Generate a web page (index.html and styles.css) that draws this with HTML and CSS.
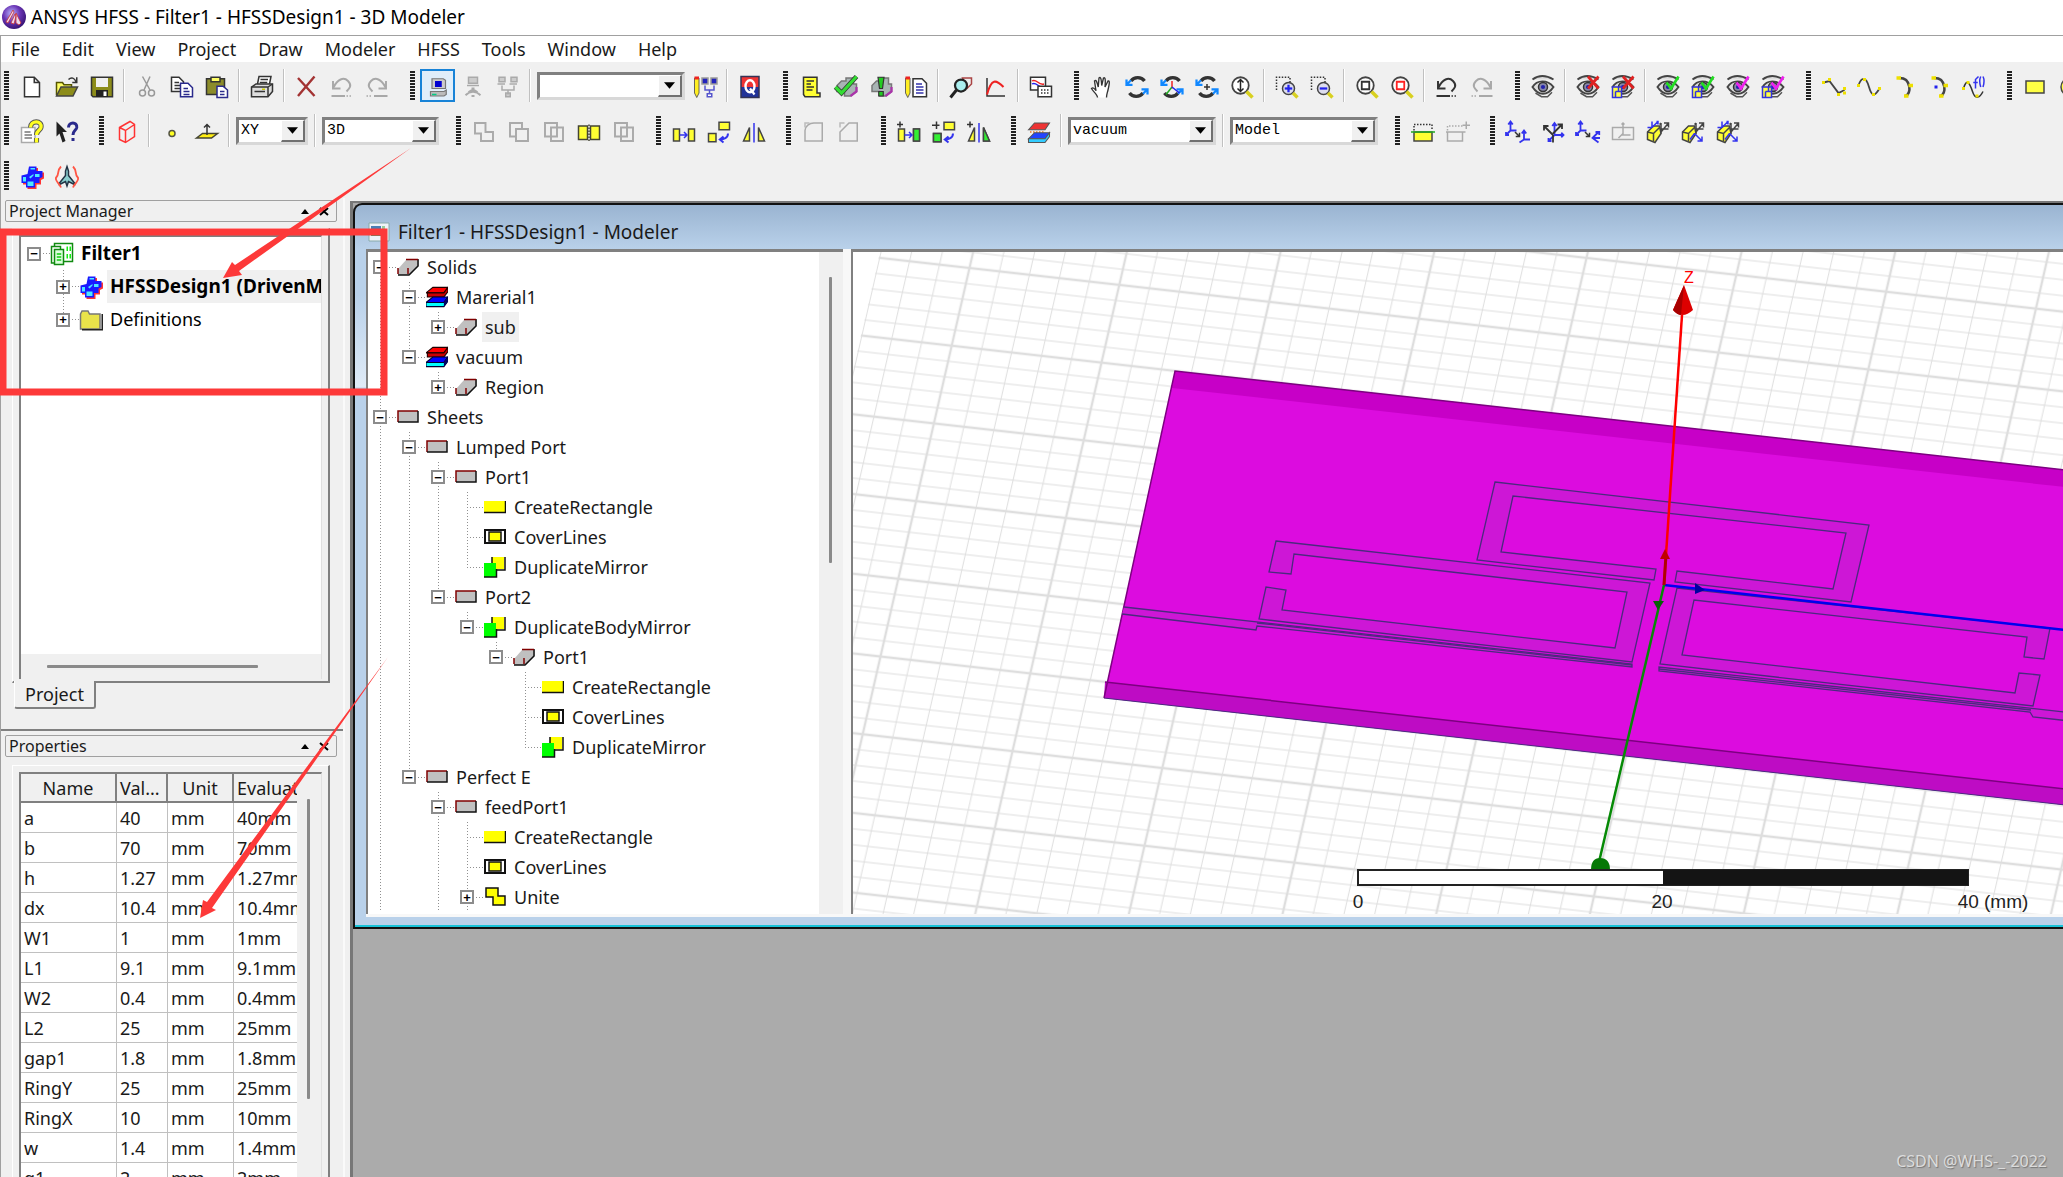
FILE: index.html
```html
<!DOCTYPE html>
<html lang="en">
<head>
<meta charset="utf-8">
<title>ANSYS HFSS - Filter1 - HFSSDesign1 - 3D Modeler</title>
<link rel="stylesheet" href="styles.css">
</head>
<body>
<svg class="defs" aria-hidden="true">
  <defs>
    <g id="new"><path d="M3 1.500h6.500l3.500 3.500v9.500H3zM9.500 1.500V5H13" fill="#fff" stroke="#333"/></g>
    <g id="open"><path d="M1 13.500V5h4l1 1.500h5V8" fill="#ffff66" stroke="#555500"/><path d="M1 14l3-6h11l-3 6z" fill="#8c8c1a" stroke="#444"/><path d="M9 3c2-2 4-1 5 1.500M14.500 1.500v3.500h-3" fill="none" stroke="#333"/></g>
    <g id="save"><path d="M1 1.500h14v13H2l-1-1z" fill="#8c8c1a" stroke="#333"/><path d="M4 2h8v6H4z" fill="#f0f0f0"/><path d="M4 10h8v4.500H4z" fill="#222"/><path d="M9 11h2v3H9z" fill="#fff"/></g>
    <g id="cut" fill="none" stroke="#999"><path d="M5 1l5 9M10 1L6 10"/><circle cx="5" cy="12" r="2"/><circle cx="11" cy="12" r="2"/></g>
    <g id="copy"><path d="M1 1.500h5l3 3V11H1z" fill="#fff" stroke="#333"/><path d="M3 5h3M3 7h4M3 9h4" stroke="#333"/><path d="M7 5.500h5l3 3v6H7z" fill="#fff" stroke="#2a2a8c"/><path d="M9 9h3M9 11h4M9 13h4" stroke="#2a2a8c"/></g>
    <g id="paste"><path d="M1 2.500h12V13H1z" fill="#8c8c2a" stroke="#333"/><path d="M4 1.500h6v3H4z" fill="#ffff66" stroke="#333"/><path d="M8 7.500h4l3 2.500v5H8z" fill="#fff" stroke="#2a2a8c"/><path d="M10 11h3M10 13h3" stroke="#2a2a8c"/></g>
    <g id="print"><path d="M5 6l1-5h8l-1 5" fill="#fff" stroke="#333"/><path d="M7 3h5M6.500 5h5" stroke="#333"/><path d="M1 8l3-2h11v5l-3 3.500H1z" fill="#ddd" stroke="#333"/><path d="M1 8h11v6M12 8l3-2M3 11h7" fill="none" stroke="#333"/><path d="M8 9.500h2" stroke="#cc0"/></g>
    <g id="del"><path d="M2 2l11 12M13 1L2 14" fill="none" stroke="#a33333" stroke-width="1.600"/></g>
    <g id="undo"><path d="M2 4v5h5M2.500 8C5 3 9 1 12 4s1 5-1 7M1 14h9" fill="none" stroke="currentColor" stroke-width="1.300"/><path d="M11 14h4" stroke="currentColor" stroke-dasharray="1 1"/></g>
    <g id="redo"><path d="M14 4v5H9M13.500 8C11 3 7 1 4 4s-1 5 1 7M6 14h9" fill="none" stroke="currentColor" stroke-width="1.300"/><path d="M1 14h4" stroke="currentColor" stroke-dasharray="1 1"/></g>
    <g id="pc"><path d="M4 2.500h7.500l1.500 1v5.500H4z" fill="#ccc" stroke="#777" stroke-width=".8"/><path d="M6 4h4.500v4H6z" fill="#0000d0"/><path d="M3 11h9l1.500-1v3L12 14H3z" fill="#bbb" stroke="#777" stroke-width=".8"/><path d="M4 13h3" stroke="#0c8"/></g>
    <g id="net1" fill="#ccc" stroke="#aaa"><path d="M5 1.500h6v4H5zM4 7h8"/><path d="M7 9h2M5 11.500c2-2 4-2 6 0M3 13.500c3-3 7-3 10 0M7 14h2" fill="none" stroke-width="1.200"/></g>
    <g id="net2" fill="#ccc" stroke="#aaa"><path d="M2 1.500h4v3H2zM10 1.500h4v3h-4zM1 6h5M9 6h5M8 10v3M6.500 12h3v2.500h-3z"/><path d="M4 7v3h8V7" fill="none"/></g>
    <g id="pnet"><path d="M1 2h3v10l-1.500 3L1 12z" fill="#ffee22" stroke="#555" stroke-width=".6"/><path d="M1 1h3v2H1z" fill="#e22"/><path d="M6 2h4v4H6zM12 2h4v4h-4z" fill="#2222bb" stroke="#999"/><path d="M8 7v3h6V7M11 10v3" fill="none" stroke="#5555cc"/><path d="M9.500 12.500h3v2h-3z" fill="#fff" stroke="#5555cc"/></g>
    <g id="q"><path d="M2 1h12v7H2z" fill="#e33"/><path d="M2 8h12v7H2z" fill="#223399"/><path d="M2 1h12v14H2z" fill="none" stroke="#335"/><ellipse cx="8" cy="7.500" rx="3" ry="4" fill="none" stroke="#fff" stroke-width="1.600"/><path d="M8 9l3 4" stroke="#fff" stroke-width="1.500"/></g>
    <g id="script"><path d="M3 1.500h9V12h2v2.500H4L3 13z" fill="#ffff33" stroke="#333"/><path d="M5 4h5M5 6h3M5 8h5M5 10h4" stroke="#333"/></g>
    <g id="gem"><path d="M8 2h5v4h2v5l-4 3H7V11H2V7l3-3h3z" fill="#a8b4b4" stroke="#777"/><path d="M11 14l4-3v-3" fill="none" stroke="#a3a" stroke-width="1.500"/></g>
    <g id="check"><path d="M1 8l4 4L15 1" fill="none" stroke="#333" stroke-width="3.200"/><path d="M1 8l4 4L15 1" fill="none" stroke="#3d3" stroke-width="2.200"/></g>
    <g id="bang"><path d="M6 1.500h4L9 9H7zM6.500 11h3v3h-3z" fill="#2c2" stroke="#333" stroke-width=".8"/></g>
    <g id="notes"><path d="M1 2h3v10l-1.500 3L1 12z" fill="#ffee22" stroke="#555" stroke-width=".6"/><path d="M1 1h3v2H1z" fill="#e22"/><path d="M6 2.500h6l3 3v9H6z" fill="#fff" stroke="#333"/><path d="M8 6h4M8 8h5M8 10h5M8 12h5" stroke="#3333aa"/></g>
    <g id="analyze"><path d="M9 2h6v4l-3 3z" fill="#eee" stroke="#a44"/><circle cx="8" cy="7" r="4" fill="#aee" stroke="#222" stroke-width="1.500"/><path d="M5 10l-4 5" stroke="#222" stroke-width="2"/></g>
    <g id="plot"><path d="M2 2v12h12" fill="none" stroke="#333"/><path d="M2 13C5 2 8 3 13 8" fill="none" stroke="#e22" stroke-width="1.400"/></g>
    <g id="cdoc"><path d="M1 1.500h10V10H1z" fill="#fff" stroke="#333"/><path d="M2 4c3-2 4 3 8 2" fill="none" stroke="#e22"/><path d="M2 6c3-2 4 3 8 2" fill="none" stroke="#22e"/><path d="M6 7.500h9v7H6z" fill="#fff" stroke="#333"/><path d="M8 10h6M8 12h6" stroke="#333" stroke-dasharray="1 1"/></g>
    <g id="hand"><path d="M5 15c0-2-3-4-4-6 1-1 2 0 3 1.500L3 4c1-1 1.500 0 2.500 4L6 2c1-1 1.500 0 1.800 5L9 2c1-.6 1.500 0 1 6l2-4c1-.3 1.300.5 0 6-.5 2-1 3-1 5" fill="#fff" stroke="#333" stroke-width=".9"/></g>
    <g id="rot" fill="none"><path d="M4 4c2-3 7-3 9 0M3 12c2 3 7 3 9 0" stroke="#333" stroke-width="2.200"/><path d="M1 3v3.500h4M15 13V9.500h-4M1.500 6L4 3.500M14.500 10L12 12.500" stroke="#1188ff" stroke-width="1.500"/></g>
    <g id="ax"><path d="M8 4v5" stroke="#e22"/><path d="M8 8l-4 5" stroke="#2a2"/><path d="M8 8l5 4" stroke="#22e"/></g>
    <g id="cross"><path d="M8 6v4M6 8h4" stroke="#333"/></g>
    <g id="lens"><circle cx="7" cy="7" r="5.500" fill="#fff" stroke="#444" stroke-width="1.200"/><path d="M11 11l4 4" stroke="#d8d020" stroke-width="2.400"/></g>
    <g id="ud"><path d="M7 3v8M5 5l2-2 2 2M5 9l2 2 2-2" fill="none" stroke="#222"/></g>
    <g id="zarea"><path d="M1 10V1.500h9v4" fill="none" stroke="#333" stroke-dasharray="1 1"/><circle cx="9" cy="9" r="4" fill="#dde" stroke="#444"/><path d="M12 12l3 3" stroke="#d8d020" stroke-width="2.200"/><path d="M6.500 9h5" stroke="#22e" stroke-width="1.500"/></g>
    <g id="plusv"><path d="M9 6.500v5" stroke="#22e" stroke-width="1.500"/></g>
    <g id="sq"><path d="M4.500 4.500h5v5h-5z" fill="none" stroke="currentColor" stroke-width="1.200"/></g>
    <g id="eye"><path d="M1 3c4-3 9-3 14 0M1 8c3-5 10-5 14 0-4 6-10 6-14 0z" fill="#ddd" stroke="#444" stroke-width="1.300"/><circle cx="8" cy="8" r="3" fill="#8888aa" stroke="#333"/><circle cx="8" cy="8" r="1.400" fill="#22a"/><path d="M3 12l4 2.500h4l3-3" fill="none" stroke="#555"/></g>
    <g id="bx"><path d="M1 8h6v7H1z" fill="#ffff44" stroke="#33d"/><path d="M3 11h4M3 11v4M5 8v3" stroke="#33d"/></g>
    <g id="rx"><path d="M8 1l7 8M15 1L8 9" stroke="#e02222" stroke-width="1.800"/></g>
    <g id="ck"><path d="M7 5l3 4 5-8" fill="none" stroke="currentColor" stroke-width="1.800"/></g>
    <g id="l1"><path d="M1 5l4-1 6 8 4-2" fill="none" stroke="#444" stroke-width="1.300"/><path d="M0 5h2M4 3h2M10 13h2M14 9h2M14 12h2" stroke="#eee000" stroke-width="2"/></g>
    <g id="l2"><path d="M1 7c2-6 5-6 7 1s4 6 7 1" fill="none" stroke="#444" stroke-width="1.200"/><path d="M0 7h2M4 3h2M10 13h2M14 9h2" stroke="#eee000" stroke-width="2"/></g>
    <g id="l3"><path d="M5 2c8 0 8 11 4 12" fill="none" stroke="#444" stroke-width="1.700"/><path d="M3 2h3M11 7h3M8 14h3" stroke="#eee000" stroke-width="2.400"/></g>
    <g id="bdot"><path d="M5 8h2" stroke="#22e" stroke-width="2"/></g>
    <g id="l5"><path d="M1 9c2-7 4-4 6 2s5 4 7 0" fill="none" stroke="#333"/><path d="M0 9h2M3 5h2M9 14h2" stroke="#eee000" stroke-width="2"/><path d="M9 9V3l2-2M7.500 5h3M12.500 1c-1 2-1 4 0 7M14 1c1 2 1 4 0 7" fill="none" stroke="#33e"/></g>
    <g id="yrect"><path d="M2 4h12v8H2z" fill="#ffff44" stroke="#444"/></g>
    <g id="ycirc"><circle cx="8" cy="8" r="6" fill="#ffff44" stroke="#444"/></g>
    <g id="help"><path d="M1 5h9v10H1z" fill="#fff" stroke="#aaa"/><path d="M3 8h4M3 10h5M3 12h5" stroke="#777"/><path d="M7 5c0-5 8-5 7 0-.4 2-3 2-3 5M11 12v3" fill="none" stroke="#555" stroke-width="3.400"/><path d="M7 5c0-5 8-5 7 0-.4 2-3 2-3 5M11 12v3" fill="none" stroke="#ffff22" stroke-width="2.200"/></g>
    <g id="whats"><path d="M1 1l7 7H5l2 6-2 1-2-6-2 2z" fill="#222"/><path d="M9 5c0-4 6-4 5.500 0-.4 2-2.500 2-2.500 5M12 12v2" fill="none" stroke="#2a2a8c" stroke-width="2"/></g>
    <g id="rbox" fill="none" stroke="#f33"><path d="M3 5l7-4 3 2v8l-6 4-4-2zM3 5l4 2 6-4M7 7v8"/></g>
    <g id="pt"><circle cx="8" cy="9" r="2" fill="#ffff22" stroke="#554"/></g>
    <g id="plane"><path d="M1 12l4-3h10l-4 3z" fill="#ffee11" stroke="#443"/><path d="M8 10V3M6 5l2-2 2 2" fill="none" stroke="#333"/></g>
    <g id="uni"><path d="M2 2h7v6h5v6H6V9H2z" fill="none" stroke="#aaa" stroke-width="1.300"/></g>
    <g id="sub"><path d="M2 2h8v4H6v5H2zM6 6h8v8H6z" fill="none" stroke="#aaa" stroke-width="1.300"/></g>
    <g id="int"><path d="M2 2h8v9H2zM6 5h8v9H6z" fill="none" stroke="#aaa" stroke-width="1.300"/></g>
    <g id="split"><path d="M1 4h6v9H1zM9 4h6v9H9z" fill="#ffff33" stroke="#443"/><path d="M8 3v11" stroke="#443" stroke-dasharray="1 1"/></g>
    <g id="move"><path d="M1 6h4v8H1zM11 6h4v8h-4z" fill="#ffff33" stroke="#444"/><path d="M5 10h5M8 8l2 2-2 2" fill="none" stroke="#33e"/></g>
    <g id="turn"><path d="M8 1.500h7v5H8zM1 9h5v5.500H1z" fill="#ffff33" stroke="#444"/><path d="M14 9c0 3-3 4-5 4M11 11l-2.500 2 2.500 2" fill="none" stroke="#33e" stroke-width="1.300"/></g>
    <g id="mir"><path d="M1 14l4-9v9zM15 14l-4-9v9z" fill="#ffff33" stroke="#444"/><path d="M8 2v13" stroke="#33e"/></g>
    <g id="movd"><path d="M11 6h4v8h-4z" fill="#3e3" stroke="#444"/><path d="M2 1v4M0 3h4" stroke="#333"/></g>
    <g id="turd"><path d="M1 9h5v5.500H1z" fill="#3e3" stroke="#444"/><path d="M3 1v5M0 3.500h5" stroke="#333"/></g>
    <g id="mird"><path d="M15 14l-4-9v9z" fill="#3e3" stroke="#444"/><path d="M2 1v4M0 3h4" stroke="#333"/></g>
    <g id="fil"><path d="M2 14V7c0-3 3-5 6-5h5.500v12z" fill="none" stroke="#aaa"/><path d="M2 5V2h3" fill="none" stroke="#bbb"/></g>
    <g id="cham"><path d="M2 14V8l6-6h5.500v12z" fill="none" stroke="#aaa"/><path d="M2 5V2h3" fill="none" stroke="#bbb"/></g>
    <g id="matl"><path d="M1 6.500L5 2h10l-3 4.500z" fill="#ee3333" stroke="#555" stroke-width=".7"/><path d="M2 8h10" stroke="#e87722" stroke-dasharray="1 1"/><path d="M1 12.500l4-4h10l-3 4z" fill="#2244ff" stroke="#555" stroke-width=".7"/><path d="M1 12.500h11l3-4V11l-3 4H1z" fill="#33ccff" stroke="#555" stroke-width=".7"/></g>
    <g id="mat"><path d="M0 5l5-4h11l-3 4z" fill="#f00" stroke="#200" stroke-width=".8"/><path d="M1 5h12l3-4v3l-3 4H1z" fill="#c00" stroke="#200" stroke-width=".8"/><path d="M0 12l5-4h11l-3 4z" fill="#00f" stroke="#003" stroke-width=".8"/><path d="M0 12h13l3-4v3l-3 4H0z" fill="#0ff" stroke="#003" stroke-width=".8"/><path d="M13 12l3-4v3l-3 4z" fill="#006"/></g>
    <g id="sec"><path d="M2 8h12v6H2z" fill="#ffff33" stroke="#444"/><path d="M0 8h16" stroke="#2a2"/><path d="M2 7V3h12v4" fill="none" stroke="#333" stroke-dasharray="1 1"/></g>
    <g id="secg" fill="none" stroke="#aaa"><path d="M1 8h10v6H1zM0 8h13M13.500 1v5M11 3.500h5"/><path d="M1 7V4h10" stroke-dasharray="1 1"/></g>
    <g id="csa" fill="none"><path d="M3 1v6h4M0 10l3-3M1.500 3L3 1l1.500 2M0 8v2h2" stroke="#33e" stroke-width="1.200"/><path d="M6 8l3 3M9 8.500V11H6.500" stroke="#333"/><path d="M12 7v6h4M9 15l3-2M10.500 9L12 7l1.500 2" stroke="#33e" stroke-width="1.200"/></g>
    <g id="csb" fill="none"><path d="M9 2v8h6M9 10l-4 4M7.500 4L9 2l1.500 2M13.500 8.500l1.500 1.500-1.500 1.500M5 12v2h2" stroke="#33e" stroke-width="1.200"/><path d="M8 10L2 4M2 7V4h3M8 10v5M8 9l6-6M11 3h3v3" stroke="#333" stroke-width="1.200"/></g>
    <g id="csc" fill="none"><path d="M3 1v6h4M0 10l3-3M1.500 3L3 1l1.500 2M0 8v2h2" stroke="#33e" stroke-width="1.200"/><path d="M6 8l3 3M9 8.500V11H6.500" stroke="#333"/><path d="M15 8l-4 4 4 3M11 12h5M13 8h2.500v2" stroke="#33e" stroke-width="1.200"/></g>
    <g id="csg" fill="none" stroke="#aaa"><path d="M1 5h14v8H1zM8 2v8h5M8 9l-3 3M7 3l1-1 1 1"/></g>
    <g id="csbox"><path d="M1 8l4-4h4l1 5-4 6-5-2z" fill="#ffff33" stroke="#444"/><path d="M1 8l4 1 4-4M5 9v5" fill="none" stroke="#444"/><path d="M10 9V2M10 8l5-6M12 2h3v3M10 6h5M9 3l1-1" fill="none" stroke="#444"/></g>
    <g id="csblue"><path d="M4 5V1M4 5H1M4 5l4-4M7 1h1v2" fill="none" stroke="#33e"/></g>
    <g id="csblue2"><path d="M9 9l5 5M11 14h3v-3M9 9l-3 4" fill="none" stroke="#33e"/></g>
    <g id="blocks"><path d="M6 1h5v3h4v4l-2 1v3h-3v3H4v-3H1V7l4-1z" fill="#f33" transform="translate(1 1)"/><path d="M6 1h5v3h4v4l-2 1v3h-3v3H4v-3H1V7l4-1z" fill="#1a1aff"/><path d="M7 2h3v1H7zM2 8h2v3H2zM10 6h3v2h-3zM6 8l3-2v1L7 9zM5 11h4v3H5z" fill="#4de8ff"/></g>
    <g id="plane2"><path d="M8 1l1 3v3l4 5v1l-4-2-1 3-1-3-4 2v-1l4-5V4z" fill="#8cc" stroke="#234"/><path d="M4 1C1 4 3 6 1 8s2 4 3 7M12 1c3 3 1 5 3 7s-2 4-3 7" fill="none" stroke="#f54" stroke-width="1.200"/></g>

    <symbol id="proj" viewBox="0 0 16 16"><path d="M3 1h12v12H3z" fill="#fff" stroke="#108a10"/><path d="M11 3h1v3h-1zM13 3h1v3h-1zM11 8h1v3h-1zM13 8h1v3h-1z" fill="#1e1"/><path d="M1 3h6v11H1z" fill="#fff" stroke="#108a10"/><path d="M3 5h6v10H3z" fill="#dfd" stroke="#108a10"/><path d="M4.500 8h3M4.500 10h3M4.500 12h3" stroke="#1c1"/></symbol>
    <symbol id="blk" viewBox="0 0 16 16"><use href="#blocks"/></symbol>
    <symbol id="folder" viewBox="0 0 16 16"><path d="M1 4l1-2h4l1 2h7v10H1z" fill="#e9e34a" stroke="#777"/><path d="M2 14.500h13.500V4" fill="none" stroke="#222"/></symbol>
    <symbol id="solid" viewBox="0 0 22 22"><path d="M1 13L9 4h13v6l-9 9H1z" fill="#c0c0c0"/><path d="M21 3v7l-9 9H1" fill="none" stroke="#111" stroke-width="1.500"/><path d="M9 3.500h12M1 12v6M11 12v6" fill="none" stroke="#800000" stroke-width="1.500"/></symbol>
    <symbol id="mats" viewBox="0 0 16 16"><use href="#mat"/></symbol>
    <symbol id="sheet" viewBox="0 0 22 22"><path d="M1 5h20v11H1z" fill="#c0c0c0"/><path d="M1 16V5h20" fill="none" stroke="#800000" stroke-width="1.500"/><path d="M1 16h20V5" fill="none" stroke="#111" stroke-width="1.500"/></symbol>
    <symbol id="crect" viewBox="0 0 22 22"><path d="M0 5h21v11H0z" fill="#ff0"/><path d="M0 16.500h21.500V5" fill="none" stroke="#111" stroke-width="1.500"/></symbol>
    <symbol id="cover" viewBox="0 0 22 22"><path d="M1 4h20v13H1z" fill="#fff" stroke="#111" stroke-width="2"/><path d="M5 6h12v9H5z" fill="#ff0" stroke="#111" stroke-width="1.500"/></symbol>
    <symbol id="dup" viewBox="0 0 22 22"><path d="M8 1h12v12H8z" fill="#ff0"/><path d="M8 1v6M21 1v13h-8" fill="none" stroke="#111" stroke-width="1.500"/><path d="M0 7h12v14H0z" fill="#0f0"/><path d="M0 21h12.500V13" fill="none" stroke="#111" stroke-width="1.500"/></symbol>
    <symbol id="unite" viewBox="0 0 22 22"><path d="M2 2h12v8h7v9H9v-8H2z" fill="#ff0" stroke="#111" stroke-width="1.500"/></symbol>
    <pattern id="mesh" width="150" height="80" patternUnits="userSpaceOnUse" patternTransform="matrix(.9987 .1127 -.2225 .9713 116.500 16)">
      <path d="M30 0v80M60 0v80M90 0v80M120 0v80M0 16h150M0 32h150M0 48h150M0 64h150" stroke="#dedede"/>
      <path d="M0 0v80M150 0v80M0 0h150M0 80h150" stroke="#dedede" stroke-width="2.400"/>
    </pattern>
    <radialGradient id="ball" cx=".4" cy=".35" r=".7"><stop offset="0" stop-color="#b9b6ff"/><stop offset=".5" stop-color="#6a35b5"/><stop offset="1" stop-color="#32106e"/></radialGradient>
  </defs>
</svg>

<header class="titlebar">
  <svg class="logo" viewBox="0 0 24 24" aria-hidden="true"><circle cx="12" cy="12" r="12" fill="url(#ball)"/><path d="M4 17L11 5l1 2-6 11zM9 18l4-9 1 2-2 8zM14 18V8l5 10-2 2z" fill="#e8d8f0" stroke="#c33" stroke-width=".8"/></svg>
  <span>ANSYS HFSS - Filter1 - HFSSDesign1 - 3D Modeler</span>
</header>
<nav class="menubar">
  <button>File</button><button>Edit</button><button>View</button><button>Project</button><button>Draw</button><button>Modeler</button><button>HFSS</button><button>Tools</button><button>Window</button><button>Help</button>
</nav>

<div class="toolbars">
  <div class="bar">
    <div class="group">
      <button class="tb" aria-label="New"><svg><use href="#new"/></svg></button>
      <button class="tb" aria-label="Open"><svg><use href="#open"/></svg></button>
      <button class="tb" aria-label="Save"><svg><use href="#save"/></svg></button>
      <i class="sep"></i>
      <button class="tb" aria-label="Cut"><svg><use href="#cut"/></svg></button>
      <button class="tb" aria-label="Copy"><svg><use href="#copy"/></svg></button>
      <button class="tb" aria-label="Paste"><svg><use href="#paste"/></svg></button>
      <i class="sep"></i>
      <button class="tb" aria-label="Print"><svg><use href="#print"/></svg></button>
      <i class="sep"></i>
      <button class="tb" aria-label="Delete"><svg><use href="#del"/></svg></button>
      <button class="tb off" aria-label="Undo"><svg><use href="#undo"/></svg></button>
      <button class="tb off" aria-label="Redo"><svg><use href="#redo"/></svg></button>
    </div>
    <div class="group">
      <button class="tb on" aria-label="Local machine"><svg><use href="#pc"/></svg></button>
      <button class="tb" aria-label="Remote"><svg><use href="#net1"/></svg></button>
      <button class="tb" aria-label="Distributed"><svg><use href="#net2"/></svg></button>
      <i class="sep"></i>
      <span class="combo wide"><select aria-label="Machine list"><option></option></select><svg viewBox="0 0 10 6"><path d="M0 0h10L5 6z"/></svg></span>
      <button class="tb" aria-label="Edit machine list"><svg><use href="#pnet"/></svg></button>
      <i class="sep"></i>
      <button class="tb" aria-label="Queue"><svg><use href="#q"/></svg></button>
    </div>
    <div class="group">
      <button class="tb" aria-label="Script"><svg><use href="#script"/></svg></button>
      <button class="tb" aria-label="Validate"><svg><use href="#gem"/><use href="#check"/></svg></button>
      <button class="tb" aria-label="Analyze all"><svg><use href="#gem"/><use href="#bang"/></svg></button>
      <button class="tb" aria-label="Edit notes"><svg><use href="#notes"/></svg></button>
      <i class="sep"></i>
      <button class="tb" aria-label="Solution data"><svg><use href="#analyze"/></svg></button>
      <button class="tb" aria-label="Results"><svg><use href="#plot"/></svg></button>
      <i class="sep"></i>
      <button class="tb" aria-label="Copy image"><svg><use href="#cdoc"/></svg></button>
    </div>
    <div class="group">
      <button class="tb" aria-label="Pan"><svg><use href="#hand"/></svg></button>
      <button class="tb" aria-label="Rotate"><svg><use href="#rot"/></svg></button>
      <button class="tb" aria-label="Rotate about axis"><svg><use href="#rot"/><use href="#ax"/></svg></button>
      <button class="tb" aria-label="Rotate about centre"><svg><use href="#rot"/><use href="#cross"/></svg></button>
      <button class="tb" aria-label="Zoom"><svg><use href="#lens"/><use href="#ud"/></svg></button>
      <i class="sep"></i>
      <button class="tb" aria-label="Zoom in"><svg><use href="#zarea"/><use href="#plusv"/></svg></button>
      <button class="tb" aria-label="Zoom out"><svg><use href="#zarea"/></svg></button>
      <i class="sep"></i>
      <button class="tb" aria-label="Fit all"><svg><use href="#lens"/><use href="#sq"/></svg></button>
      <button class="tb red" aria-label="Fit selection"><svg><use href="#lens"/><use href="#sq"/></svg></button>
      <i class="sep"></i>
      <button class="tb" aria-label="Undo view"><svg><use href="#undo"/></svg></button>
      <button class="tb off" aria-label="Redo view"><svg><use href="#redo"/></svg></button>
    </div>
    <div class="group">
      <button class="tb" aria-label="Visibility"><svg><use href="#eye"/></svg></button>
      <i class="sep"></i>
      <button class="tb" aria-label="Hide"><svg><use href="#eye"/><use href="#rx"/></svg></button>
      <button class="tb" aria-label="Hide in all views"><svg><use href="#eye"/><use href="#bx"/><use href="#rx"/></svg></button>
      <i class="sep"></i>
      <button class="tb green" aria-label="Show"><svg><use href="#eye"/><use href="#ck"/></svg></button>
      <button class="tb green" aria-label="Show in all views"><svg><use href="#eye"/><use href="#bx"/><use href="#ck"/></svg></button>
      <button class="tb pink" aria-label="Show only"><svg><use href="#eye"/><use href="#ck"/></svg></button>
      <button class="tb pink" aria-label="Show only in all views"><svg><use href="#eye"/><use href="#bx"/><use href="#ck"/></svg></button>
    </div>
    <div class="group">
      <button class="tb" aria-label="Line"><svg><use href="#l1"/></svg></button>
      <button class="tb" aria-label="Spline"><svg><use href="#l2"/></svg></button>
      <button class="tb" aria-label="Three point arc"><svg><use href="#l3"/></svg></button>
      <button class="tb" aria-label="Centre point arc"><svg><use href="#l3"/><use href="#bdot"/></svg></button>
      <button class="tb" aria-label="Equation curve"><svg><use href="#l5"/></svg></button>
    </div>
    <div class="group">
      <button class="tb" aria-label="Rectangle"><svg><use href="#yrect"/></svg></button>
      <button class="tb" aria-label="Circle"><svg><use href="#ycirc"/></svg></button>
    </div>
  </div>

  <div class="bar tight">
    <div class="group">
      <button class="tb" aria-label="Help topics"><svg><use href="#help"/></svg></button>
      <button class="tb" aria-label="Context help"><svg><use href="#whats"/></svg></button>
    </div>
    <div class="group">
      <button class="tb" aria-label="Region"><svg><use href="#rbox"/></svg></button>
      <i class="sep"></i>
      <button class="tb" aria-label="Point"><svg><use href="#pt"/></svg></button>
      <button class="tb" aria-label="Plane"><svg><use href="#plane"/></svg></button>
      <i class="sep"></i>
      <span class="combo narrow"><select aria-label="Drawing plane"><option>XY</option></select><svg viewBox="0 0 10 6"><path d="M0 0h10L5 6z"/></svg></span>
      <i class="sep"></i>
      <span class="combo mid"><select aria-label="Movement mode"><option>3D</option></select><svg viewBox="0 0 10 6"><path d="M0 0h10L5 6z"/></svg></span>
    </div>
    <div class="group">
      <button class="tb" aria-label="Unite"><svg><use href="#uni"/></svg></button>
      <button class="tb" aria-label="Subtract"><svg><use href="#sub"/></svg></button>
      <button class="tb" aria-label="Intersect"><svg><use href="#int"/></svg></button>
      <button class="tb" aria-label="Split"><svg><use href="#split"/></svg></button>
      <button class="tb" aria-label="Imprint"><svg><use href="#int"/></svg></button>
    </div>
    <div class="group">
      <button class="tb" aria-label="Move"><svg><use href="#move"/></svg></button>
      <button class="tb" aria-label="Rotate object"><svg><use href="#turn"/></svg></button>
      <button class="tb" aria-label="Mirror"><svg><use href="#mir"/></svg></button>
    </div>
    <div class="group">
      <button class="tb" aria-label="Fillet"><svg><use href="#fil"/></svg></button>
      <button class="tb" aria-label="Chamfer"><svg><use href="#cham"/></svg></button>
    </div>
    <div class="group">
      <button class="tb" aria-label="Duplicate along line"><svg><use href="#move"/><use href="#movd"/></svg></button>
      <button class="tb" aria-label="Duplicate around axis"><svg><use href="#turn"/><use href="#turd"/></svg></button>
      <button class="tb" aria-label="Duplicate mirror"><svg><use href="#mir"/><use href="#mird"/></svg></button>
    </div>
    <div class="group">
      <button class="tb" aria-label="Assign material"><svg><use href="#matl"/></svg></button>
      <i class="sep"></i>
      <span class="combo wide"><select aria-label="Material"><option>vacuum</option></select><svg viewBox="0 0 10 6"><path d="M0 0h10L5 6z"/></svg></span>
      <i class="sep"></i>
      <span class="combo wide"><select aria-label="Model type"><option>Model</option></select><svg viewBox="0 0 10 6"><path d="M0 0h10L5 6z"/></svg></span>
    </div>
    <div class="group">
      <button class="tb" aria-label="Section"><svg><use href="#sec"/></svg></button>
      <button class="tb" aria-label="Add section"><svg><use href="#secg"/></svg></button>
    </div>
    <div class="group">
      <button class="tb" aria-label="Offset coordinate system"><svg><use href="#csa"/></svg></button>
      <button class="tb" aria-label="Rotated coordinate system"><svg><use href="#csb"/></svg></button>
      <button class="tb" aria-label="Offset and rotated system"><svg><use href="#csc"/></svg></button>
      <button class="tb" aria-label="Face system"><svg><use href="#csg"/></svg></button>
      <button class="tb" aria-label="Object offset system"><svg><use href="#csbox"/><use href="#csblue"/></svg></button>
      <button class="tb" aria-label="Object rotated system"><svg><use href="#csbox"/><use href="#csblue2"/></svg></button>
      <button class="tb" aria-label="Object both system"><svg><use href="#csbox"/><use href="#csblue"/><use href="#csblue2"/></svg></button>
    </div>
  </div>

  <div class="bar">
    <div class="group">
      <button class="tb" aria-label="HFSS design"><svg><use href="#blocks"/></svg></button>
      <button class="tb" aria-label="HFSS-IE design"><svg><use href="#plane2"/></svg></button>
    </div>
  </div>
</div>

<main class="work">
  <aside class="dock">
    <section class="panel project">
      <h2 class="cap"><span>Project Manager</span><button aria-label="Collapse"><svg viewBox="0 0 10 10"><path d="M1 8l4-5 4 5z"/></svg></button><button aria-label="Close"><svg viewBox="0 0 10 10"><path d="M1 2l8 7M9 2L1 9" stroke="#000" stroke-width="2"/></svg></button></h2>
      <div class="frame">
        <div class="well">
          <ul class="tree ptree">
            <li><i class="g e first last"><button aria-label="Collapse Filter1">−</button></i><svg><use href="#proj"/></svg><b>Filter1</b></li>
            <li><i class="g"></i><i class="g e"><button aria-label="Expand HFSSDesign1">+</button></i><svg><use href="#blk"/></svg><b class="sel">HFSSDesign1 (DrivenModal)*</b></li>
            <li><i class="g"></i><i class="g e last"><button aria-label="Expand Definitions">+</button></i><svg><use href="#folder"/></svg><span>Definitions</span></li>
          </ul>
          <div class="hscroll"><i></i></div>
        </div>
      </div>
      <button class="tab">Project</button>
    </section>
    <section class="panel props">
      <h2 class="cap"><span>Properties</span><button aria-label="Collapse"><svg viewBox="0 0 10 10"><path d="M1 8l4-5 4 5z"/></svg></button><button aria-label="Close"><svg viewBox="0 0 10 10"><path d="M1 2l8 7M9 2L1 9" stroke="#000" stroke-width="2"/></svg></button></h2>
      <div class="frame">
        <div class="well row">
          <div class="clip">
            <table>
              <colgroup><col class="c1"><col class="c2"><col class="c3"><col></colgroup>
              <thead><tr><th>Name</th><th class="lt">Val...</th><th>Unit</th><th class="lt">Evaluated Value</th></tr></thead>
              <tbody>
                <tr><td>a</td><td>40</td><td>mm</td><td>40mm</td></tr>
                <tr><td>b</td><td>70</td><td>mm</td><td>70mm</td></tr>
                <tr><td>h</td><td>1.27</td><td>mm</td><td>1.27mm</td></tr>
                <tr><td>dx</td><td>10.4</td><td>mm</td><td>10.4mm</td></tr>
                <tr><td>W1</td><td>1</td><td>mm</td><td>1mm</td></tr>
                <tr><td>L1</td><td>9.1</td><td>mm</td><td>9.1mm</td></tr>
                <tr><td>W2</td><td>0.4</td><td>mm</td><td>0.4mm</td></tr>
                <tr><td>L2</td><td>25</td><td>mm</td><td>25mm</td></tr>
                <tr><td>gap1</td><td>1.8</td><td>mm</td><td>1.8mm</td></tr>
                <tr><td>RingY</td><td>25</td><td>mm</td><td>25mm</td></tr>
                <tr><td>RingX</td><td>10</td><td>mm</td><td>10mm</td></tr>
                <tr><td>w</td><td>1.4</td><td>mm</td><td>1.4mm</td></tr>
                <tr><td>g1</td><td>2</td><td>mm</td><td>2mm</td></tr>
              </tbody>
            </table>
          </div>
          <div class="vscroll"><i></i></div>
        </div>
      </div>
    </section>
  </aside>

  <section class="mdi">
    <article class="win">
      <h1 class="wincap"><svg viewBox="0 0 22 22" aria-hidden="true"><path d="M1 2h20v18H1z" fill="#eef2f8" stroke="#8aa"/><path d="M3 5h10v5H3z" fill="#4a7fb5"/><path d="M3 10h10v5H3z" fill="#3a9a6a"/><path d="M14 5h3v10h-3z" fill="#9c9"/></svg>Filter1 - HFSSDesign1 - Modeler</h1>
      <div class="panes">
        <div class="treepane">
          <ul class="tree mtree">
            <li><i class="g e first"><button aria-label="Collapse">−</button></i><svg><use href="#solid"/></svg><span>Solids</span></li>
            <li><i class="g v"></i><i class="g e"><button aria-label="Collapse">−</button></i><svg><use href="#mats"/></svg><span>Marerial1</span></li>
            <li><i class="g v"></i><i class="g v"></i><i class="g e last"><button aria-label="Expand">+</button></i><svg><use href="#solid"/></svg><span class="sel">sub</span></li>
            <li><i class="g v"></i><i class="g e last"><button aria-label="Collapse">−</button></i><svg><use href="#mats"/></svg><span>vacuum</span></li>
            <li><i class="g v"></i><i class="g"></i><i class="g e last"><button aria-label="Expand">+</button></i><svg><use href="#solid"/></svg><span>Region</span></li>
            <li><i class="g e"><button aria-label="Collapse">−</button></i><svg><use href="#sheet"/></svg><span>Sheets</span></li>
            <li><i class="g v"></i><i class="g e"><button aria-label="Collapse">−</button></i><svg><use href="#sheet"/></svg><span>Lumped Port</span></li>
            <li><i class="g v"></i><i class="g v"></i><i class="g e"><button aria-label="Collapse">−</button></i><svg><use href="#sheet"/></svg><span>Port1</span></li>
            <li><i class="g v"></i><i class="g v"></i><i class="g v"></i><i class="g e"></i><svg><use href="#crect"/></svg><span>CreateRectangle</span></li>
            <li><i class="g v"></i><i class="g v"></i><i class="g v"></i><i class="g e"></i><svg><use href="#cover"/></svg><span>CoverLines</span></li>
            <li><i class="g v"></i><i class="g v"></i><i class="g v"></i><i class="g e last"></i><svg><use href="#dup"/></svg><span>DuplicateMirror</span></li>
            <li><i class="g v"></i><i class="g v"></i><i class="g e last"><button aria-label="Collapse">−</button></i><svg><use href="#sheet"/></svg><span>Port2</span></li>
            <li><i class="g v"></i><i class="g v"></i><i class="g"></i><i class="g e last"><button aria-label="Collapse">−</button></i><svg><use href="#dup"/></svg><span>DuplicateBodyMirror</span></li>
            <li><i class="g v"></i><i class="g v"></i><i class="g"></i><i class="g"></i><i class="g e last"><button aria-label="Collapse">−</button></i><svg><use href="#solid"/></svg><span>Port1</span></li>
            <li><i class="g v"></i><i class="g v"></i><i class="g"></i><i class="g"></i><i class="g"></i><i class="g e"></i><svg><use href="#crect"/></svg><span>CreateRectangle</span></li>
            <li><i class="g v"></i><i class="g v"></i><i class="g"></i><i class="g"></i><i class="g"></i><i class="g e"></i><svg><use href="#cover"/></svg><span>CoverLines</span></li>
            <li><i class="g v"></i><i class="g v"></i><i class="g"></i><i class="g"></i><i class="g"></i><i class="g e last"></i><svg><use href="#dup"/></svg><span>DuplicateMirror</span></li>
            <li><i class="g v"></i><i class="g e last"><button aria-label="Collapse">−</button></i><svg><use href="#sheet"/></svg><span>Perfect E</span></li>
            <li><i class="g v"></i><i class="g"></i><i class="g e"><button aria-label="Collapse">−</button></i><svg><use href="#sheet"/></svg><span>feedPort1</span></li>
            <li><i class="g v"></i><i class="g"></i><i class="g v"></i><i class="g e"></i><svg><use href="#crect"/></svg><span>CreateRectangle</span></li>
            <li><i class="g v"></i><i class="g"></i><i class="g v"></i><i class="g e"></i><svg><use href="#cover"/></svg><span>CoverLines</span></li>
            <li><i class="g v"></i><i class="g"></i><i class="g v"></i><i class="g e"><button aria-label="Expand">+</button></i><svg><use href="#unite"/></svg><span>Unite</span></li>
          </ul>
          <div class="vscroll tall"><i></i></div>
        </div>
        <div class="view">
          <svg role="img" aria-label="3D view of the filter">
            <path d="M27 0H1400V700H0V118z" fill="url(#mesh)"/>
            <g transform="translate(-853 -252)" fill="none">
              <path d="M1175 371L2263 492V827L1104 698z" fill="#dc0cdf"/>
              <path d="M1175 371L2263 492V509L1172 388z" fill="#c700c7"/>
              <path d="M1105 682L2263 811V827L1104 698z" fill="#be0cc4"/>
              <path d="M1105 682L2263 811M1104 698L1175 371L2263 492" stroke="#7d0080" stroke-width="1.500"/>
              <path d="M1104 698L2263 827" stroke="#4a2a80"/>
              <g fill="#cd17d6" stroke="#4b2a7e" stroke-width="1.300">
                <path d="M1495 482L1869 525L1851 602L1675 582L1677 571L1833 589L1846 533L1513 496L1501 552L1656 569L1654 580L1477 560z"/>
                <path d="M1276 541L1650 583L1632 662L1259 619L1266 587L1286 590L1282 610L1615 648L1627 592L1294 554L1291 574L1269 572z"/>
                <path d="M1124 607L1632 664V667L1257 626L1256 630L1122 614"/>
                <path d="M1257 623L1632 665"/>
                <path d="M1677 588L2050 628L2044 659L2024 657L2027 637L1694 600L1682 655L2015 693L2019 673L2040 675L2033 706L1660 664z"/>
                <path d="M2163 723L1659 667V671L2030 712L2033 717L2163 731"/>
                <path d="M1659 669L2031 710"/>
              </g>
              <g stroke-width="2.500">
                <path d="M1664 585L2163 641" stroke="#0000ee"/>
                <path d="M1664 585L1682 315" stroke="#ff0000"/>
                <path d="M1664 585L1599 862" stroke="#068a06"/>
              </g>
              <path d="M1664 585L1666 555" stroke="#b00000" stroke-width="3"/>
              <path d="M1665 549L1660 559L1670 559z" fill="#c00000"/>
              <path d="M1705 590L1695 583L1695 594z" fill="#0000a0"/>
              <path d="M1658 610L1653 601L1664 601z" fill="#066006"/>
              <path d="M1684 285L1673 310Q1682 320 1693 310z" fill="#dd0000"/>
              <path d="M1684 285L1673 310Q1677 315 1681 315z" fill="#a80000"/>
              <path d="M1591 870Q1591 858 1600 858Q1610 858 1610 870z" fill="#067806"/>
              <path d="M1358 870H1968V885H1358z" fill="#fff" stroke="#222" stroke-width="2"/>
              <path d="M1663 870H1968V885H1663z" fill="#141414"/>
              <text class="axis" x="1684" y="283">Z</text>
              <g class="scale"><text x="1358" y="908">0</text><text x="1662" y="908">20</text><text x="1993" y="908">40 (mm)</text></g>
            </g>
          </svg>
        </div>
      </div>
    </article>
    <p class="mark">CSDN @WHS-_-2022</p>
  </section>
</main>

<svg class="notes" aria-hidden="true">
  <path d="M3 232h381v160H3z" fill="none" stroke="#fd3939" stroke-width="7"/>
  <path d="M223 278L232 262L235 265L411 148L239 271L242 275z" fill="#fd3939"/>
  <path d="M200 918L203 900L207 902L388 657L212 908L216 910z" fill="#fd3939"/>
</svg>
</body>
</html>
```
FILE: styles.css
```css
* { box-sizing: border-box; }
body {
  margin: 0;
  height: 100vh;
  display: flex;
  flex-direction: column;
  overflow: hidden;
  position: relative;
  background: #f0f0f0;
  color: #1a1a1a;
  font: 18px/24px "Noto Sans", "Open Sans", sans-serif;
}
button { font: inherit; color: inherit; border: 0; background: none; padding: 0; margin: 0; }
h1, h2, p, ul { margin: 0; padding: 0; font-weight: 400; list-style: none; }
i { font-style: normal; }
.defs { position: absolute; width: 0; height: 0; }

.titlebar { display: flex; align-items: center; gap: 5px; height: 35px; padding: 0 0 2px 2px; background: #fff; color: #000; flex: none; font-size: 19px; }
.logo { width: 24px; height: 24px; }
.menubar { display: flex; gap: 22px; height: 27px; padding-left: 10px; background: #fff; border-top: 1px solid #a0a0a0; border-left: 1px solid #a0a0a0; flex: none; }

.toolbars { flex: none; border-left: 1px solid #a0a0a0; padding-top: 1px; }
.bar { display: flex; gap: 13px; height: 45px; align-items: center; }
.bar.tight { gap: 12px; }
.group { display: flex; align-items: center; flex: none; height: 45px; }
.group::before {
  content: "";
  width: 5px;
  height: 30px;
  margin: 0 5px 0 3px;
  background: repeating-linear-gradient(#222 0 2px, transparent 2px 3px);
}
.tb { width: 35px; height: 33px; display: flex; align-items: center; justify-content: center; color: #333; flex: none; }
.tb svg { width: 24px; height: 24px; margin-top: 2px; overflow: visible; }
.tb use { transform: scale(1.5); }
.tb.on { background: #e0eefa; border: 2px solid #1883d7; }
.tb.off { color: #a8a8a8; }
.tb.red { color: #ff2222; }
.tb.green { color: #22dd22; }
.tb.pink { color: #ee22ee; }
.sep { width: 2px; height: 33px; margin: 0 4px; background: #c0c0c0; border-right: 1px solid #fff; }
.combo {
  display: flex;
  position: relative;
  height: 28px;
  margin: 0 2px;
  border: 3px solid #808080;
  border-right-color: #d8d8d8;
  border-bottom-color: #d8d8d8;
  background: #fff;
}
.combo.wide { width: 148px; }
.combo.mid { width: 117px; }
.combo.narrow { width: 72px; }
.combo select { appearance: none; border: 0; margin: 0; padding: 0 0 0 2px; width: 100%; background: #fff; color: #000; font: 15px/22px "Liberation Mono", monospace; }
.combo svg {
  position: absolute;
  right: 0;
  top: 0;
  width: 24px;
  height: 22px;
  padding: 6px 5px;
  background: #f0f0f0;
  border: 1px solid #fff;
  border-right: 2px solid #707070;
  border-bottom: 2px solid #707070;
  pointer-events: none;
}

.work { display: flex; flex: 1; min-height: 0; }
.dock { width: 345px; flex: none; display: flex; flex-direction: column; border-left: 1px solid #a0a0a0; border-right: 2px solid #fafafa; }
.panel { display: flex; flex-direction: column; min-height: 0; padding: 2px 6px 0 0; }
.project { flex: 508 1 0; border-bottom: 2px solid #808080; padding-bottom: 20px; }
.props { flex: 441 1 0; padding-top: 4px; }
.cap { display: flex; align-items: center; height: 22px; margin-left: 4px; padding: 0 7px 0 3px; border: 1px solid #a0a0a0; border-radius: 2px; font-size: 16px; line-height: 20px; flex: none; }
.cap span { flex: 1; }
.cap button { display: flex; margin-left: 9px; }
.cap svg { width: 10px; height: 10px; }
.frame { display: flex; flex: 1; min-height: 0; margin: 6px 7px 0 11px; padding: 6px; padding-bottom: 2px; border: 1px solid #fff; border-right: 2px solid #808080; border-bottom: 2px solid #808080; }
.well { flex: 1; min-width: 0; display: flex; flex-direction: column; background: #fff; border-left: 2px solid #808080; border-top: 2px solid #808080; border-right: 1px solid #e0e0e0; overflow: hidden; }
.well.row { flex-direction: row; background: #f0f0f0; }
.props .frame { margin-top: 8px; border-bottom: 0; padding-bottom: 0; }
.tab { align-self: flex-start; width: 82px; height: 28px; margin: -2px 0 0 13px; background: #f0f0f0; border-left: 1px solid #fff; border-right: 2px solid #808080; border-bottom: 2px solid #808080; border-radius: 0 0 3px 3px; }
.hscroll { height: 25px; margin-top: auto; padding: 11px 63px 0 26px; background: #f0f0f0; }
.hscroll i { display: block; height: 3px; background: #8a8a8a; border-radius: 1px; }
.vscroll { width: 24px; flex: none; background: #f0f0f0; padding: 25px 11px 0 10px; }
.vscroll i { display: block; width: 3px; height: 300px; background: #8a8a8a; border-radius: 1px; }
.vscroll.tall i { height: 286px; }

.tree li { display: flex; align-items: center; height: 30px; white-space: nowrap; }
.tree li > svg { width: 22px; height: 22px; flex: none; margin: 0 5px 0 -5px; }
.tree li > span, .tree li > b { padding: 0 3px; line-height: 30px; }
.g {
  --v: repeating-linear-gradient(#909090 0 1px, transparent 1px 3px);
  --h: repeating-linear-gradient(90deg, #909090 0 1px, transparent 1px 3px);
  width: 29px;
  height: 100%;
  flex: none;
  display: flex;
  align-items: center;
  background-repeat: no-repeat;
}
.g.v { background-image: var(--v); background-size: 1px 100%; background-position: 7px 0; }
.g.e { background-image: var(--v), var(--h); background-size: 1px 100%, 16px 1px; background-position: 7px 0, 7px 50%; }
.g.e.last { background-size: 1px 50%, 16px 1px; }
.g.e.first { background-position: 7px 15px, 7px 50%; }
.g.e.first.last { background-size: 0 0, 16px 1px; }
.g button { width: 14px; height: 14px; border: 2px solid #8c8c8c; background: #fff; color: #000; font: 700 13px/9px "Liberation Sans", sans-serif; text-align: center; }
.sel { background: #f0f0f0; }
.ptree { padding-left: 6px; }
.ptree li { height: 33px; }
.ptree li > svg { width: 24px; height: 24px; margin: 0 4px 0 -6px; }
.ptree li > b, .ptree li > span { line-height: 33px; color: #000; }
.ptree li > b { font-size: 19px; }

.clip { flex: 1; min-width: 0; overflow: hidden; background: #fff; }
table { width: 340px; table-layout: fixed; border-collapse: separate; border-spacing: 0; }
.c1 { width: 96px; }
.c2 { width: 51px; }
.c3 { width: 66px; }
th { height: 29px; padding: 0 3px; font-weight: 400; text-align: center; background: #f0f0f0; border-right: 2px solid #808080; border-bottom: 2px solid #808080; white-space: nowrap; }
th.lt { text-align: left; }
td { height: 30px; padding: 0 3px; border-right: 1px solid #c0c0c0; border-bottom: 1px solid #c0c0c0; white-space: nowrap; }

.mdi { flex: 1; min-width: 0; margin: 3px 0 0 5px; background: #ababab; border-left: 3px solid #777; border-top: 2px solid #777; display: flex; flex-direction: column; }
.win {
  border-left: 2px solid #111;
  border-top: 2px solid #111;
  border-bottom: 2px solid #111;
  border-radius: 9px 0 0 0;
  padding: 0 0 10px 11px;
  background: linear-gradient(#9ab4d1 0, #b9d1ea 44px, #b9d1ea 90px, #e0ebf7 182px, #b9d1ea 183px);
  box-shadow: inset 0 -2px 0 #17c3d8;
}
.wincap { display: flex; align-items: center; gap: 8px; height: 44px; padding: 9px 0 0 2px; font-size: 19px; line-height: 24px; }
.wincap svg { width: 22px; height: 22px; }
.panes { display: flex; background: #f8f8f8; padding-bottom: 3px; }
.treepane { display: flex; width: 477px; flex: none; background: #fff; border-left: 2px solid #808080; border-top: 3px solid #808080; }
.mtree { flex: 1; min-width: 0; padding: 0 0 2px 5px; }
.view { flex: 1; min-width: 0; margin-left: 8px; border-left: 2px solid #808080; border-top: 3px solid #808080; background: #fff; position: relative; }
.view > svg { position: absolute; inset: 0; width: 100%; height: 100%; }
.axis { font: 16px "Liberation Sans", sans-serif; fill: #f00; }
.scale { font: 19px "Liberation Sans", sans-serif; fill: #222; text-anchor: middle; }
.mark { margin-top: auto; padding: 0 16px 4px; text-align: right; font-size: 16px; color: #dcdcdc; text-shadow: 1px 1px 1px #777; }
.notes { position: absolute; left: 0; top: 0; width: 420px; height: 100%; pointer-events: none; }
```
